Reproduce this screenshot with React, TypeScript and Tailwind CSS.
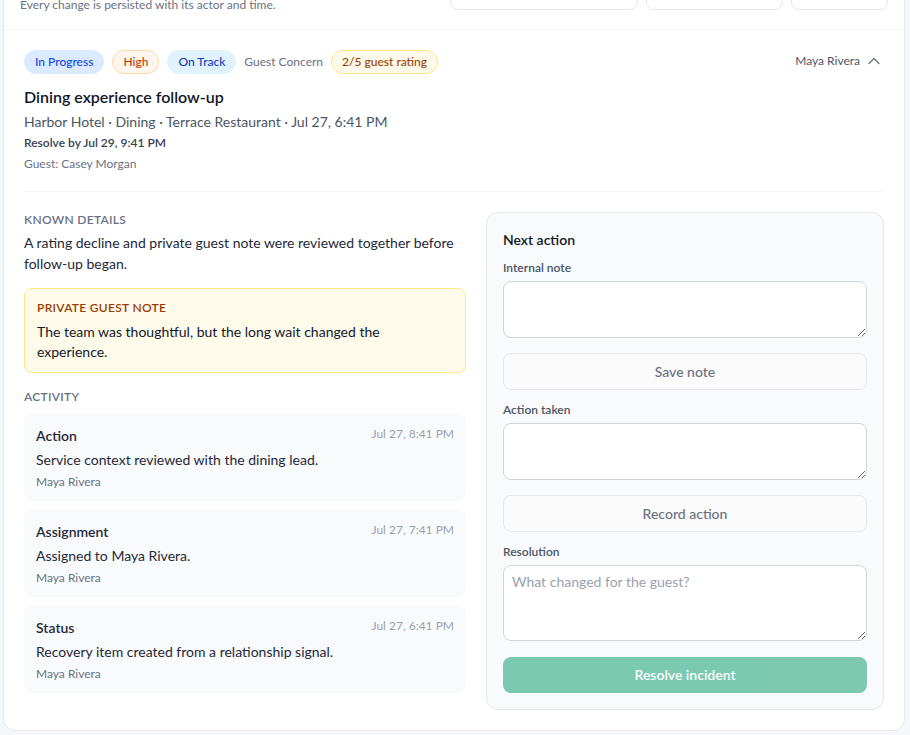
import { ChevronUp } from "lucide-react";

const activity = [
  {
    kind: "Action",
    time: "Jul 27, 8:41 PM",
    body: "Service context reviewed with the dining lead.",
    actor: "Maya Rivera",
  },
  {
    kind: "Assignment",
    time: "Jul 27, 7:41 PM",
    body: "Assigned to Maya Rivera.",
    actor: "Maya Rivera",
  },
  {
    kind: "Status",
    time: "Jul 27, 6:41 PM",
    body: "Recovery item created from a relationship signal.",
    actor: "Maya Rivera",
  },
];

function Field({
  label,
  tall,
  placeholder,
}: {
  label: string;
  tall?: boolean;
  placeholder?: string;
}) {
  return (
    <div>
      <label className="block text-xs font-semibold leading-4 text-gray-600">
        {label}
      </label>
      <textarea
        placeholder={placeholder}
        className={`mt-[5px] block w-full rounded-lg border border-gray-300 bg-white px-2 py-1.5 text-sm text-gray-800 placeholder:text-gray-400 outline-none ${
          tall ? "h-[76px]" : "h-[57px]"
        }`}
      />
    </div>
  );
}

export default function App() {
  return (
    <div
      className="min-h-screen bg-[#f5f8fb] pl-[3px] pr-[5px] pb-1"
      style={{ fontFamily: "Lato, 'Noto Sans', sans-serif" }}
    >
      <div className="-mt-[44px] rounded-xl border border-gray-200 bg-white">
        {/* Header */}
        <div className="flex items-center justify-between border-b border-gray-100 px-4 py-4">
          <div className="h-10">
            <h2 className="text-base font-semibold leading-6 text-gray-900">
              Recovery timeline
            </h2>
            <p className="text-xs leading-4 text-gray-500">
              Every change is persisted with its actor and time.
            </p>
          </div>
          <div className="flex gap-2">
            <button className="h-[34px] w-[188px] rounded-lg border border-gray-200 bg-white text-sm text-gray-700">
              All properties
            </button>
            <button className="h-[34px] w-[137px] rounded-lg border border-gray-200 bg-white text-sm text-gray-700">
              All statuses
            </button>
            <button className="h-[34px] w-[97px] rounded-lg border border-gray-200 bg-white text-sm text-gray-700">
              Refresh
            </button>
          </div>
        </div>

        {/* Incident */}
        <div className="px-5 pt-5 pb-5">
          <div className="flex items-start justify-between">
            <div>
              <div className="flex items-center gap-2 text-xs leading-4">
                <span className="rounded-full border border-blue-100 bg-blue-100 px-2.5 py-[3px] font-medium text-blue-700">
                  In Progress
                </span>
                <span className="rounded-full border border-orange-200 bg-orange-50 px-2.5 py-[3px] font-medium text-orange-700">
                  High
                </span>
                <span className="rounded-full border border-sky-100 bg-sky-100 px-2.5 py-[3px] font-medium text-blue-800">
                  On Track
                </span>
                <span className="text-gray-500">Guest Concern</span>
                <span className="rounded-full border border-amber-200 bg-amber-50 px-2.5 py-[3px] font-medium text-amber-800">
                  2/5 guest rating
                </span>
              </div>
              <h3 className="mt-[11px] text-base font-semibold leading-6 text-gray-900">
                Dining experience follow-up
              </h3>
              <p className="mt-[3px] text-sm leading-5 text-gray-600">
                Harbor Hotel · Dining · Terrace Restaurant · Jul 27, 6:41 PM
              </p>
              <p className="mt-[3px] text-xs font-semibold leading-4 text-gray-700">
                Resolve by Jul 29, 9:41 PM
              </p>
              <p className="mt-[5px] text-xs leading-4 text-gray-500">
                Guest: Casey Morgan
              </p>
            </div>
            <div className="mt-[1px] flex items-center gap-1 text-xs leading-4 text-gray-600">
              <span>Maya Rivera</span>
              <ChevronUp className="h-5 w-5 text-gray-500" strokeWidth={1.5} />
            </div>
          </div>

          <div className="mt-[19px] border-t border-gray-100 pt-5">
            <div className="grid grid-cols-[442px_1fr] gap-5">
              {/* Left column */}
              <div>
                <p className="text-xs font-semibold uppercase leading-4 tracking-wide text-gray-500">
                  Known details
                </p>
                <p className="mt-1 text-sm leading-[21px] text-gray-800">
                  A rating decline and private guest note were reviewed
                  together before follow-up began.
                </p>

                <div className="mt-[14px] rounded-lg border border-amber-200 bg-amber-50 px-3 pt-[11px] pb-[10px]">
                  <p className="text-xs font-semibold uppercase leading-4 tracking-wide text-amber-800">
                    Private guest note
                  </p>
                  <p className="mt-[6px] text-sm leading-5 text-gray-900">
                    The team was thoughtful, but the long wait changed the
                    experience.
                  </p>
                </div>

                <p className="mt-4 text-xs font-semibold uppercase leading-4 tracking-wide text-gray-500">
                  Activity
                </p>
                <div className="mt-2 space-y-2">
                  {activity.map((a) => (
                    <div
                      key={a.kind}
                      className="rounded-lg bg-gray-50 px-3 pt-[13px] pb-[11px]"
                    >
                      <div className="flex items-start justify-between">
                        <p className="text-sm font-semibold leading-5 text-gray-800">
                          {a.kind}
                        </p>
                        <p className="text-xs leading-4 text-gray-400">
                          {a.time}
                        </p>
                      </div>
                      <p className="mt-1 text-sm leading-5 text-gray-800">
                        {a.body}
                      </p>
                      <p className="mt-1 text-xs leading-4 text-gray-500">
                        {a.actor}
                      </p>
                    </div>
                  ))}
                </div>
              </div>

              {/* Right panel */}
              <div className="self-start rounded-xl border border-gray-200 bg-gray-50 px-4 pt-[17px] pb-4">
                <p className="text-sm font-semibold leading-5 text-gray-900">
                  Next action
                </p>
                <div className="mt-[10px]">
                  <Field label="Internal note" />
                </div>
                <button className="mt-[15px] h-[37px] w-full rounded-lg border border-gray-200 bg-[#fbfbfc] text-sm font-medium text-gray-500">
                  Save note
                </button>
                <div className="mt-3">
                  <Field label="Action taken" />
                </div>
                <button className="mt-[15px] h-[37px] w-full rounded-lg border border-gray-200 bg-[#fbfbfc] text-sm font-medium text-gray-500">
                  Record action
                </button>
                <div className="mt-3">
                  <Field
                    label="Resolution"
                    tall
                    placeholder="What changed for the guest?"
                  />
                </div>
                <button className="mt-4 h-9 w-full rounded-lg bg-emerald-600 text-sm font-semibold text-white opacity-50">
                  Resolve incident
                </button>
              </div>
            </div>
          </div>
        </div>
      </div>
    </div>
  );
}
